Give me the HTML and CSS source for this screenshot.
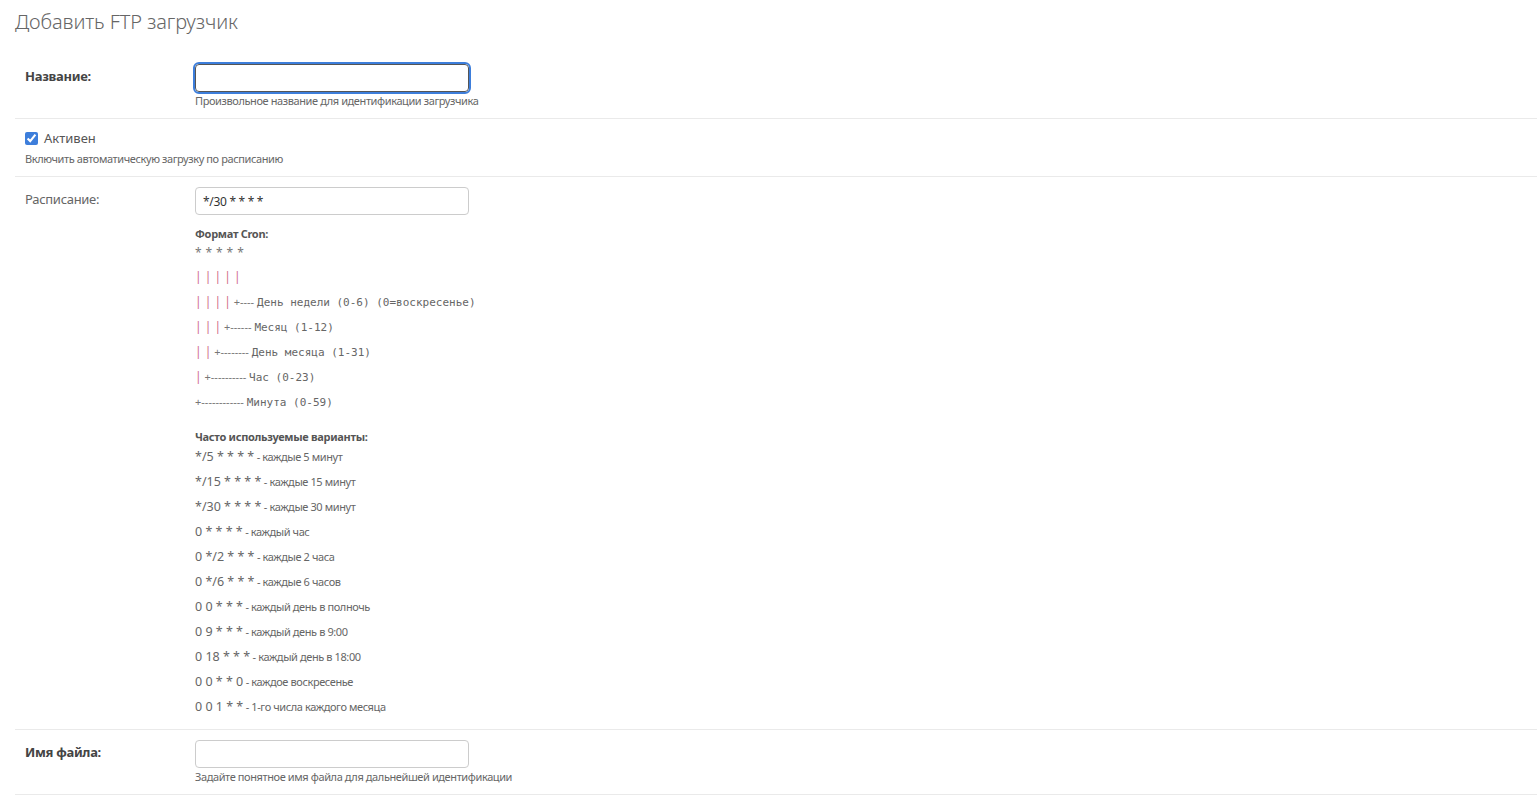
FILE: index.html
```html
<!DOCTYPE html>
<html lang="ru">
<head>
    <meta charset="UTF-8">
    <meta name="viewport" content="width=device-width, initial-scale=1.0">
    <title>Добавить FTP загрузчик</title>
    <link rel="stylesheet" href="styles.css">
</head>
<body>
    <h1 class="page-title">Добавить FTP загрузчик</h1>

    <form class="change-form">
        <div class="form-row">
            <label class="field-label required" for="id_name">Название:</label>
            <div class="field-box">
                <input id="id_name" class="text-input focused" type="text">
                <div class="help">Произвольное название для идентификации загрузчика</div>
            </div>
        </div>

        <div class="form-row checkbox-row">
            <div class="check-line">
                <input id="id_active" type="checkbox" checked>
                <label for="id_active">Активен</label>
            </div>
            <div class="help">Включить автоматическую загрузку по расписанию</div>
        </div>

        <div class="form-row">
            <label class="field-label" for="id_schedule">Расписание:</label>
            <div class="field-box">
                <input id="id_schedule" class="text-input" type="text" value="*/30 * * * *">
                <div class="help cron-help">
                    <div class="help-title">Формат Cron:</div>
                    <div class="cron-stars">* * * * *</div>
                    <div class="cron-line"><span class="pipe">| | | | |</span></div>
                    <div class="cron-line"><span class="pipe">| | | |</span> <span class="dash">+----</span> <span class="mono">День недели (0-6) (0=воскресенье)</span></div>
                    <div class="cron-line"><span class="pipe">| | |</span> <span class="dash">+------</span> <span class="mono">Месяц (1-12)</span></div>
                    <div class="cron-line"><span class="pipe">| |</span> <span class="dash">+--------</span> <span class="mono">День месяца (1-31)</span></div>
                    <div class="cron-line"><span class="pipe">|</span> <span class="dash">+----------</span> <span class="mono">Час (0-23)</span></div>
                    <div class="cron-line"><span class="dash">+------------</span> <span class="mono">Минута (0-59)</span></div>

                    <div class="help-title examples-title">Часто используемые варианты:</div>
                    <div class="example"><span class="expr">*/5 * * * *</span> - каждые 5 минут</div>
                    <div class="example"><span class="expr">*/15 * * * *</span> - каждые 15 минут</div>
                    <div class="example"><span class="expr">*/30 * * * *</span> - каждые 30 минут</div>
                    <div class="example"><span class="expr">0 * * * *</span> - каждый час</div>
                    <div class="example"><span class="expr">0 */2 * * *</span> - каждые 2 часа</div>
                    <div class="example"><span class="expr">0 */6 * * *</span> - каждые 6 часов</div>
                    <div class="example"><span class="expr">0 0 * * *</span> - каждый день в полночь</div>
                    <div class="example"><span class="expr">0 9 * * *</span> - каждый день в 9:00</div>
                    <div class="example"><span class="expr">0 18 * * *</span> - каждый день в 18:00</div>
                    <div class="example"><span class="expr">0 0 * * 0</span> - каждое воскресенье</div>
                    <div class="example"><span class="expr">0 0 1 * *</span> - 1-го числа каждого месяца</div>
                </div>
            </div>
        </div>

        <div class="form-row">
            <label class="field-label required" for="id_filename">Имя файла:</label>
            <div class="field-box">
                <input id="id_filename" class="text-input" type="text">
                <div class="help">Задайте понятное имя файла для дальнейшей идентификации</div>
            </div>
        </div>
    </form>
</body>
</html>
```

FILE: styles.css
```css
body {
    font-family: "Noto Sans", Arial, sans-serif;
    font-size: 13px;
    color: #666;
    background: #fff;
    margin: 0;
    padding: 0 0 0 15px;
}
.page-title {
    font-size: 20px;
    font-weight: 300;
    color: #666;
    margin: 0;
    padding-top: 9px;
    height: 45px;
    line-height: 26px;
    letter-spacing: -0.1px;
}
.form-row {
    display: flex;
    padding: 10px 10px;
    border-bottom: 1px solid #eaeaea;
}
.field-label {
    width: 170px;
    flex-shrink: 0;
    padding-top: 3px;
    line-height: 18px;
    color: #666;
    letter-spacing: -0.3px;
}
.field-label.required {
    font-weight: bold;
    color: #444;
}
.text-input {
    display: block;
    box-sizing: border-box;
    width: 274px;
    height: 28px;
    margin: 0;
    padding: 4px 7px;
    border: 1px solid #ccc;
    border-radius: 4px;
    font-family: inherit;
    font-size: 12px;
    letter-spacing: -0.3px;
    color: #333;
}
.text-input.focused {
    border-color: #555;
    outline: 2px solid #3d7edb;
    outline-offset: 0;
}
.help {
    font-size: 11px;
    color: #666;
    margin-top: 2px;
    line-height: 14px;
    letter-spacing: -0.4px;
}

/* чекбокс */
.checkbox-row {
    flex-direction: column;
    padding-top: 12px;
    padding-bottom: 10px;
}
.check-line {
    display: flex;
    align-items: center;
    height: 14px;
}
.check-line input {
    width: 13px;
    height: 13px;
    margin: 0 6px 0 0;
    accent-color: #3d7edb;
}
.check-line label {
    color: #555;
    font-size: 13px;
}
.checkbox-row .help {
    margin-top: 7px;
}

/* подсказка cron */
.cron-help {
    margin-top: 12px;
    letter-spacing: 0;
}
.help-title {
    font-weight: bold;
    color: #555;
    line-height: 14px;
    letter-spacing: -0.3px;
}
.cron-stars {
    font-size: 12px;
    line-height: 18px;
    margin-top: 3px;
    margin-bottom: 2px;
    letter-spacing: 0.4px;
    color: #777;
}
.cron-line {
    height: 25px;
    line-height: 25px;
}
.pipe {
    color: #cf6b89;
    font-size: 12px;
}
.dash {
    color: #777;
    font-size: 11px;
    letter-spacing: 0;
}
.mono {
    font-family: "DejaVu Sans Mono", monospace;
    font-size: 11px;
    color: #666;
}
.examples-title {
    margin-top: 16px;
}
.example {
    height: 25px;
    line-height: 25px;
    letter-spacing: -0.4px;
}
.example .expr {
    font-size: 12.5px;
    letter-spacing: 0;
    color: #666;
}
```
